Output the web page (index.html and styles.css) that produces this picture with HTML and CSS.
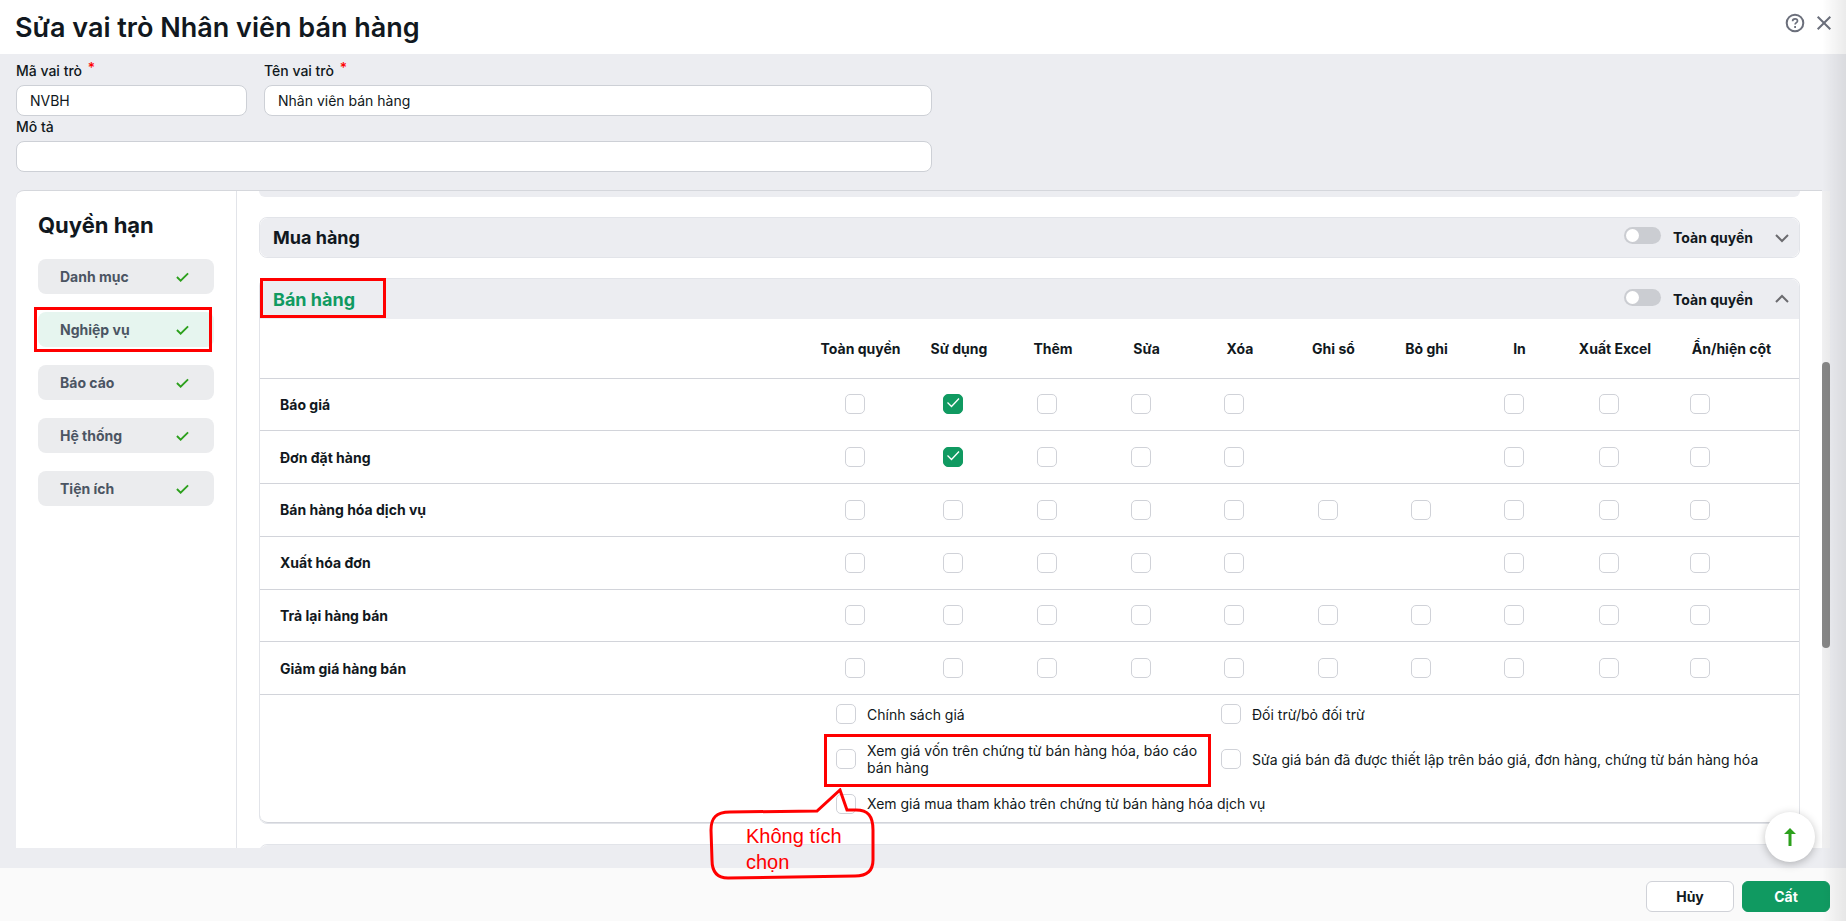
FILE: index.html
```html
<!DOCTYPE html>
<html lang="vi">
<head>
    <meta charset="UTF-8">
    <meta name="viewport" content="width=device-width, initial-scale=1.0">
    <title>Sửa vai trò Nhân viên bán hàng</title>
    <link rel="stylesheet" href="styles.css">
</head>
<body>
    <header class="header">
        <h1>Sửa vai trò Nhân viên bán hàng</h1>
        <div class="header-tools">
            <button class="icon-btn" type="button" aria-label="Trợ giúp">
                <svg width="20" height="20" viewBox="0 0 20 20" fill="none" stroke="#6b6f7b" stroke-width="2">
                    <circle cx="10" cy="10" r="8.3"/>
                    <path d="M7.6 8.2c0-1.5 1-2.4 2.5-2.4s2.4.9 2.4 2.1c0 1.7-2.4 1.9-2.4 3.7" stroke-width="1.7"/>
                    <path d="M9.2 14h1.8" stroke-width="1.8"/>
                </svg>
            </button>
            <button class="icon-btn" type="button" aria-label="Đóng">
                <svg width="20" height="20" viewBox="0 0 20 20" fill="none" stroke="#6b6f7b" stroke-width="2">
                    <path d="M3.7 3.7l12.6 12.6M16.3 3.7L3.7 16.3"/>
                </svg>
            </button>
        </div>
    </header>

    <form class="info">
        <div class="field">
            <label for="code">Mã vai trò <span class="required">*</span></label>
            <input type="text" id="code" value="NVBH">
        </div>
        <div class="field">
            <label for="name">Tên vai trò <span class="required">*</span></label>
            <input type="text" id="name" value="Nhân viên bán hàng">
        </div>
        <div class="field field-wide">
            <label for="desc">Mô tả</label>
            <input type="text" id="desc">
        </div>
    </form>

    <main class="panel">
        <nav class="sidebar">
            <h2>Quyền hạn</h2>
            <button type="button" class="tab">Danh mục <svg class="tick" viewBox="0 0 14 10"><path d="M1 5l4 4 8-8"/></svg></button>
            <button type="button" class="tab active">Nghiệp vụ <svg class="tick" viewBox="0 0 14 10"><path d="M1 5l4 4 8-8"/></svg><span class="mark mark-tab"></span></button>
            <button type="button" class="tab">Báo cáo <svg class="tick" viewBox="0 0 14 10"><path d="M1 5l4 4 8-8"/></svg></button>
            <button type="button" class="tab">Hệ thống <svg class="tick" viewBox="0 0 14 10"><path d="M1 5l4 4 8-8"/></svg></button>
            <button type="button" class="tab">Tiện ích <svg class="tick" viewBox="0 0 14 10"><path d="M1 5l4 4 8-8"/></svg></button>
        </nav>

        <div class="content">
            <div class="group-end"></div>

            <section class="group">
                <div class="group-head">
                    <h3>Mua hàng</h3>
                    <input type="checkbox" class="switch" id="all-buy">
                    <label for="all-buy">Toàn quyền</label>
                    <svg class="chevron" viewBox="0 0 16 10"><path d="M2 2l6 6 6-6"/></svg>
                </div>
            </section>

            <section class="group">
                <div class="group-head open">
                    <h3>Bán hàng</h3>
                    <input type="checkbox" class="switch" id="all-sell">
                    <label for="all-sell">Toàn quyền</label>
                    <svg class="chevron" viewBox="0 0 16 10"><path d="M2 8l6-6 6 6"/></svg>
                    <span class="mark mark-group"></span>
                </div>
                <table>
                    <colgroup>
                        <col>
                        <col class="col-all">
                        <col class="col-a"><col class="col-a"><col class="col-b"><col class="col-a"><col class="col-b"><col class="col-b"><col class="col-b">
                        <col class="col-excel">
                        <col class="col-show">
                    </colgroup>
                    <thead>
                        <tr>
                            <th></th>
                            <th>Toàn quyền</th>
                            <th>Sử dụng</th>
                            <th>Thêm</th>
                            <th>Sửa</th>
                            <th>Xóa</th>
                            <th>Ghi sổ</th>
                            <th>Bỏ ghi</th>
                            <th>In</th>
                            <th>Xuất Excel</th>
                            <th>Ẩn/hiện cột</th>
                        </tr>
                    </thead>
                    <tbody id="rights"></tbody>
                </table>
                <div class="options">
                    <label><input type="checkbox"> <span>Chính sách giá</span></label>
                    <label><input type="checkbox"> <span>Đối trừ/bỏ đối trừ</span></label>
                    <label><input type="checkbox"> <span>Xem giá vốn trên chứng từ bán hàng hóa, báo cáo bán hàng</span><i class="mark mark-option"></i></label>
                    <label><input type="checkbox"> <span>Sửa giá bán đã được thiết lập trên báo giá, đơn hàng, chứng từ bán hàng hóa</span></label>
                    <label class="full"><input type="checkbox"> <span>Xem giá mua tham khảo trên chứng từ bán hàng hóa dịch vụ</span></label>
                </div>
            </section>

            <section class="group">
                <div class="group-head"></div>
            </section>
        </div>
        <div class="scrollbar"><div class="thumb"></div></div>
    </main>

    <footer class="footer">
        <button type="button" class="btn">Hủy</button>
        <button type="button" class="btn btn-save">Cất</button>
    </footer>

    <button type="button" class="to-top" aria-label="Lên đầu trang">
        <svg width="14" height="20" viewBox="0 0 14 20"><path d="M7 1l6 6H8.5v12h-3V7H1z" fill="#2ca01c"/></svg>
    </button>

    <div class="callout">
        <svg width="168" height="92" viewBox="0 0 168 92" fill="none" stroke="#ff0000" stroke-width="3">
            <path d="M22 24C8 24 3 30 3 42L4 72C4 84 9 90 20 90L147 88C160 88 165 82 165 72V42C165 28 160 22 148 22L139 22L132 2L109 23Z"/>
        </svg>
        <p>Không tích chọn</p>
    </div>
    <div class="edge"></div>

    <script>
        // t = ticked, o = empty box, - = right not available
        const ROWS = [
            ['Báo giá', 'otooo--ooo'],
            ['Đơn đặt hàng', 'otooo--ooo'],
            ['Bán hàng hóa dịch vụ', 'oooooooooo'],
            ['Xuất hóa đơn', 'ooooo--ooo'],
            ['Trả lại hàng bán', 'oooooooooo'],
            ['Giảm giá hàng bán', 'oooooooooo']
        ];
        const HEADS = document.querySelectorAll('thead th');
        const BODY = document.querySelector('tbody#rights');
        for (const [name, boxes] of ROWS) {
            let row = document.createElement('tr');
            let cells = '<th scope="row">' + name + '</th>';
            for (let c = 0; c < boxes.length; c++) {
                let label = name + ' - ' + HEADS[c + 1].textContent;
                let checked = boxes[c] == 't' ? ' checked' : '';
                cells += '<td>' + (boxes[c] == '-' ? '' : '<input type="checkbox" aria-label="' + label + '"' + checked + '>') + '</td>';
            }
            row.innerHTML = cells;
            BODY.appendChild(row);
        }
    </script>
</body>
</html>
```
FILE: styles.css
```css
* {
    box-sizing: border-box;
}

body {
    margin: 0;
    height: 100vh;
    display: flex;
    flex-direction: column;
    position: relative;
    overflow: hidden;
    background-color: #ecedf1;
    color: #111820;
    font: 14px Inter, sans-serif;
}

h1, h2, h3, p {
    margin: 0;
}

button, input {
    font: inherit;
    color: inherit;
}

.header {
    display: flex;
    align-items: center;
    justify-content: space-between;
    height: 54px;
    padding: 0 12px 0 15px;
    background-color: #fff;
}

h1 {
    font-size: 27px;
    font-weight: 600;
}

.header-tools {
    display: flex;
    gap: 9px;
    margin-bottom: 8px;
}

.icon-btn {
    width: 20px;
    height: 20px;
    padding: 0;
    border: 0;
    background: none;
}

.icon-btn svg {
    display: block;
}

/* role info */
.info {
    display: grid;
    grid-template-columns: 231px 668px;
    column-gap: 17px;
    padding: 6px 16px 18px;
}

.field label {
    display: block;
    height: 25px;
    line-height: 22px;
    font-weight: 500;
}

.field input {
    display: block;
    width: 100%;
    height: 31px;
    padding: 0 13px;
    border: 1px solid #cdd0d6;
    border-radius: 8px;
    background-color: #fff;
}

.field-wide {
    grid-column: 1 / 3;
}

.required {
    margin-left: 2px;
    color: #ff0000;
    line-height: 0;
    vertical-align: 3px;
}

/* permissions */
.panel {
    flex: 1;
    min-height: 0;
    display: flex;
    margin: 0 24px 20px 16px;
    border-top: 1px solid #d5d7dc;
    border-top-left-radius: 8px;
    background-color: #fff;
}

.sidebar {
    flex: none;
    display: flex;
    flex-direction: column;
    gap: 18px;
    width: 221px;
    padding: 20px 22px;
    border-right: 1px solid #e2e4e9;
}

h2 {
    height: 30px;
    line-height: 28px;
    font-size: 22px;
    font-weight: 700;
}

.tab {
    position: relative;
    display: flex;
    align-items: center;
    justify-content: space-between;
    height: 35px;
    padding: 0 25px 0 22px;
    border: 0;
    border-radius: 8px;
    background-color: #ebecee;
    color: #4b5563;
    font-weight: 700;
}

.tab.active {
    background-color: #e6f5ef;
}

.tick {
    width: 13px;
    height: 10px;
    fill: none;
    stroke: #2ca01c;
    stroke-width: 2;
}

.content {
    flex: 1;
    display: flex;
    flex-direction: column;
    gap: 20px;
    padding: 0 22px;
    overflow: hidden;
}

.group-end {
    flex: none;
    height: 6px;
    border-radius: 0 0 8px 8px;
    background-color: #ecedf1;
}

.group {
    flex: none;
    border: 1px solid #e2e4e9;
    border-radius: 8px;
}

.group-head {
    position: relative;
    display: flex;
    align-items: center;
    height: 39px;
    padding: 0 9px 0 13px;
    border-radius: 8px;
    background-color: #ecedf1;
}

.group-head.open {
    height: 40px;
    border-radius: 8px 8px 0 0;
}

.group-head label {
    margin: 0 21px 0 12px;
    font-weight: 700;
}

h3 {
    flex: 1;
    font-size: 18px;
    font-weight: 700;
}

.open h3 {
    color: #109a61;
}

.switch {
    appearance: none;
    width: 37px;
    height: 17px;
    margin: 0 0 4px;
    padding: 2px;
    border-radius: 9px;
    background-color: #cbcdd2;
}

.switch::before {
    content: "";
    display: block;
    width: 13px;
    height: 13px;
    border-radius: 50%;
    background-color: #fff;
}

.chevron {
    width: 16px;
    height: 10px;
    fill: none;
    stroke: #6b6b6f;
    stroke-width: 2;
}

table {
    width: 100%;
    height: 376px;
    table-layout: fixed;
    border-collapse: collapse;
}

.col-all { width: 103px; }
.col-a { width: 94px; }
.col-b { width: 93px; }
.col-excel { width: 98px; }
.col-show { width: 135px; }

thead tr {
    height: 59px;
}

th, td {
    padding: 0;
    border-bottom: 1px solid #d2d4da;
    text-align: center;
    font-weight: 700;
}

tbody th {
    padding-left: 20px;
    text-align: left;
}

td {
    padding-right: 12px;
}

td:last-child {
    padding-left: 26px;
    text-align: left;
}

td input, .options input {
    appearance: none;
    flex: none;
    display: inline-block;
    width: 20px;
    height: 20px;
    margin: 0;
    border: 1px solid #d0d2d8;
    border-radius: 5px;
    background-color: #fff;
    vertical-align: middle;
}

td input:checked {
    border-color: #109a61;
    background: #109a61 url("data:image/svg+xml,%3Csvg xmlns='http://www.w3.org/2000/svg' viewBox='0 0 18 18' fill='none' stroke='white' stroke-width='1.3'%3E%3Cpath d='M3.5 7.5l4 4 7.5-8'/%3E%3C/svg%3E");
}

.options {
    display: grid;
    grid-template-columns: 385px 549px;
    grid-template-rows: 38px 52px 37px;
    justify-content: end;
    padding-right: 29px;
    border-bottom: 1px solid #d2d4da;
    border-radius: 0 0 8px 8px;
    line-height: 17px;
}

.options label {
    position: relative;
    display: flex;
    align-items: center;
    gap: 11px;
}

.options .full {
    grid-column: 1 / 3;
}

.scrollbar {
    width: 8px;
    margin-right: -8px;
    position: relative;
    background-color: #f0f0f1;
}

.thumb {
    position: absolute;
    top: 26%;
    width: 8px;
    height: 286px;
    border-radius: 4px;
    background-color: #868686;
}

.footer {
    display: flex;
    align-items: center;
    justify-content: flex-end;
    gap: 8px;
    height: 53px;
    padding: 3px 16px 0;
    background-color: #fafafa;
}

.btn {
    width: 88px;
    height: 31px;
    border: 1px solid #d0d2d8;
    border-radius: 6px;
    background-color: #fff;
    font-weight: 700;
}

.btn-save {
    border-color: #109a61;
    background-color: #109a61;
    color: #fff;
}

.to-top {
    position: absolute;
    right: 31px;
    bottom: 59px;
    display: flex;
    align-items: center;
    justify-content: center;
    width: 50px;
    height: 50px;
    border: 0;
    border-radius: 50%;
    background-color: #fff;
    box-shadow: 0 2px 8px rgba(0, 0, 0, 0.25);
}

/* red notes over the form */
.mark {
    position: absolute;
    border: 3px solid #ff0000;
}

.mark-tab {
    inset: -5px 2px -5px -4px;
}

.mark-group {
    left: 0;
    top: -1px;
    width: 126px;
    height: 40px;
}

.mark-option {
    inset: 1px 10px -2px -12px;
}

.callout {
    position: absolute;
    right: 970px;
    bottom: 41px;
    width: 168px;
    height: 92px;
}

.callout svg {
    position: absolute;
}

.callout p {
    width: 140px;
    padding: 35px 0 0 38px;
    color: #ff0000;
    font: 20px/26px "Liberation Sans", sans-serif;
}

.edge {
    position: absolute;
    top: 0;
    right: 0;
    bottom: 0;
    width: 24px;
    background: linear-gradient(to right, rgba(0, 0, 0, 0), rgba(0, 0, 0, 0.08));
    pointer-events: none;
}
```
